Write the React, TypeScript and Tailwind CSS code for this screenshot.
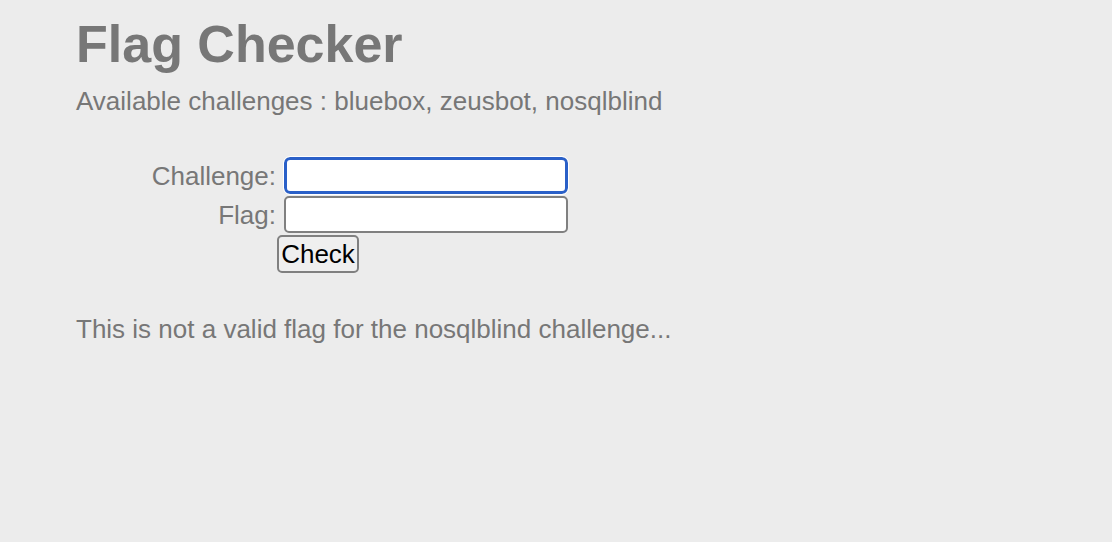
export default function App() {
  return (
    <div className="min-h-screen bg-[#ececec] pl-[76px] pt-[14px] font-['Liberation_Sans',Arial,sans-serif] text-[#777777]">
      <h1 className="text-[52px] font-bold leading-[60px]">Flag Checker</h1>
      <p className="mt-[12px] text-[26px] leading-[30px]">
        Available challenges : bluebox, zeusbot, nosqlblind
      </p>

      {/* Form */}
      <form className="mt-[41px] flex flex-col gap-[2px] text-[26px] leading-[30px]" onSubmit={(e) => e.preventDefault()}>
        <div className="flex items-start">
          <label htmlFor="challenge" className="mt-[4px] w-[201px] pr-[1px] text-right">
            Challenge:
          </label>
          <input
            id="challenge"
            type="text"
            className="ml-[7px] h-[37px] w-[284px] rounded-[6px] border-[3px] border-[#2a60c8] bg-white outline outline-1 outline-white"
          />
        </div>
        <div className="flex items-start">
          <label htmlFor="flag" className="mt-[4px] w-[201px] pr-[1px] text-right">
            Flag:
          </label>
          <input
            id="flag"
            type="text"
            className="ml-[7px] h-[37px] w-[284px] rounded-[5px] border-2 border-[#808080] bg-white outline-none"
          />
        </div>
        <div className="pl-[201px]">
          <button
            type="submit"
            className="h-[38px] w-[82px] rounded-[5px] border-2 border-[#808080] bg-[#efefef] text-[26px] leading-[30px] text-black"
          >
            Check
          </button>
        </div>
      </form>

      <p className="mt-[41px] text-[26px] leading-[30px]">
        This is not a valid flag for the nosqlblind challenge...
      </p>
    </div>
  );
}
